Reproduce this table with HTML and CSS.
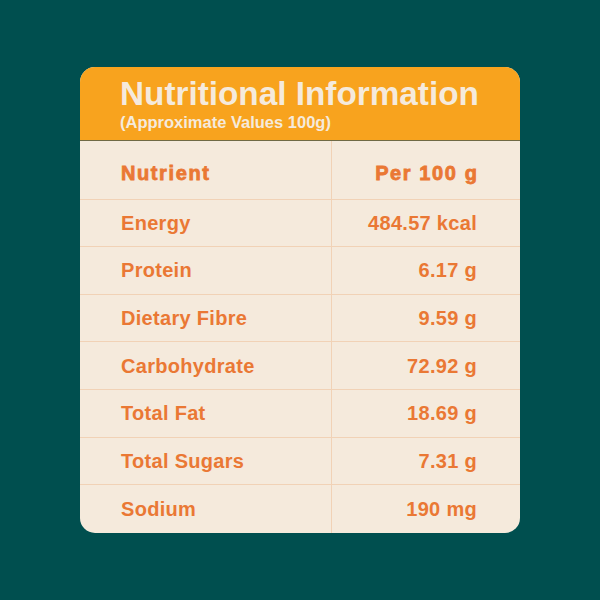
FILE: index.html
```html
<!DOCTYPE html>
<html>
<head>
<meta charset="utf-8">
<link rel="stylesheet" href="styles.css">
</head>
<body>
<div class="card">
  <div class="card-head">
    <div class="title">Nutritional Information</div>
    <div class="subtitle">(Approximate Values 100g)</div>
  </div>
  <div class="table">
    <div class="cell name th">Nutrient</div><div class="cell val th">Per 100 g</div>
    <div class="cell name">Energy</div><div class="cell val">484.57 kcal</div>
    <div class="cell name">Protein</div><div class="cell val">6.17 g</div>
    <div class="cell name">Dietary Fibre</div><div class="cell val">9.59 g</div>
    <div class="cell name">Carbohydrate</div><div class="cell val">72.92 g</div>
    <div class="cell name">Total Fat</div><div class="cell val">18.69 g</div>
    <div class="cell name">Total Sugars</div><div class="cell val">7.31 g</div>
    <div class="cell name last">Sodium</div><div class="cell val last">190 mg</div>
  </div>
</div>
</body>
</html>
```
FILE: styles.css
```css
html, body {
  margin: 0;
  padding: 0;
}
body {
  background: #004f4f;
  width: 600px;
  height: 600px;
  padding-top: 67px;
  box-sizing: border-box;
  font-family: "Liberation Sans", Arial, sans-serif;
}
.card {
  margin-left: 80px;
  width: 440px;
  border-radius: 15px;
  overflow: hidden;
  background: #f5eadc;
}
.card-head {
  background: #f8a31e;
  padding: 8.6px 0 9px 40px;
  border-bottom: 1px solid #6f6a45;
  color: #f5eadc;
  font-weight: bold;
}
.title {
  font-size: 33.3px;
  line-height: 36px;
}
.subtitle {
  font-size: 16.5px;
  line-height: 18px;
  margin-top: 1px;
}
.table {
  display: grid;
  grid-template-columns: 252px 188px;
  grid-template-rows: 59px repeat(7, 47.6px);
}
.cell {
  display: flex;
  align-items: center;
  box-sizing: border-box;
  border-bottom: 1px solid #f1d2b6;
  color: #ea7834;
  font-weight: bold;
  font-size: 20px;
  letter-spacing: 0.3px;
  line-height: 24px;
}
.name {
  padding-left: 41px;
  border-right: 1px solid #f1d2b6;
}
.val {
  justify-content: flex-end;
  padding-right: 43px;
}
.th {
  font-size: 20px;
  letter-spacing: 1.6px;
  -webkit-text-stroke: 0.8px #ea7834;
  padding-top: 6px;
}
.val.th {
  padding-right: 41.5px;
}
.last {
  border-bottom: none;
}
```
